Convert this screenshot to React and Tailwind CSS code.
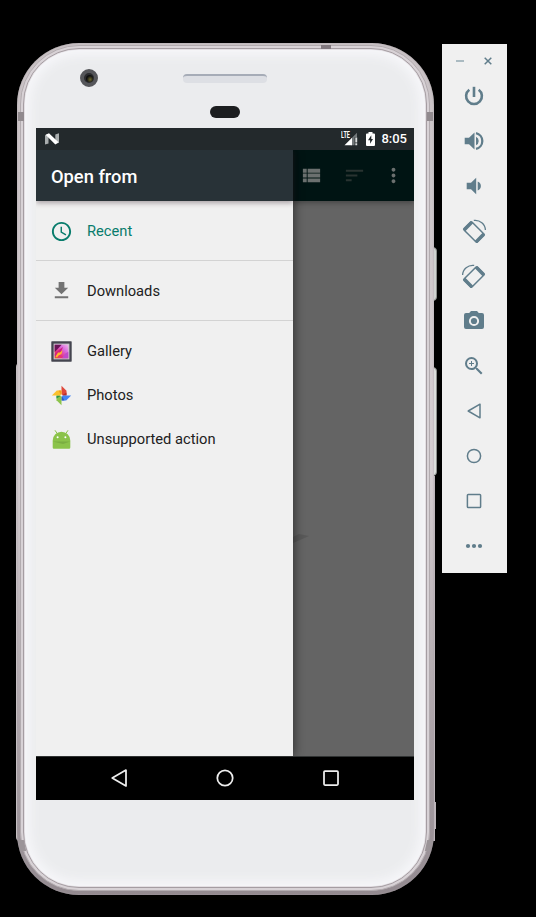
import React from 'react';
import {
  MdZoomIn,
  MdViewList,
  MdSort,
  MdMoreVert,
  MdAccessTime,
  MdFileDownload,
} from 'react-icons/md';

const BackIcon = ({ size = 24, className = '' }) => (
  <svg width={size} height={size} viewBox="0 0 24 24" className={className} fill="none" stroke="currentColor" strokeWidth="1.5" strokeLinejoin="round">
    <path d="M18 5.2v13.6L6.2 12z" />
  </svg>
);

const HomeIcon = ({ size = 24 }) => (
  <svg width={size} height={size} viewBox="0 0 24 24" fill="none" stroke="currentColor" strokeWidth="1.5">
    <circle cx="12" cy="12" r="6.6" />
  </svg>
);

const OverviewIcon = ({ size = 24, inset = 5.4 }) => (
  <svg width={size} height={size} viewBox="0 0 24 24" fill="none" stroke="currentColor" strokeWidth="1.5">
    <rect x={inset} y={inset} width={24 - 2 * inset} height={24 - 2 * inset} rx="0.8" />
  </svg>
);

const MoreIcon = () => (
  <svg width="24" height="24" viewBox="0 0 24 24" fill="currentColor">
    <circle cx="6" cy="12" r="2.1" />
    <circle cx="12" cy="12" r="2.1" />
    <circle cx="18" cy="12" r="2.1" />
  </svg>
);

const PowerIcon = () => (
  <svg width="24" height="24" viewBox="0 0 24 24" fill="none" stroke="currentColor" strokeWidth="2.6">
    <path d="M12 2.800V13" />
    <path d="M7.300 5.800a7.900 7.900 0 1 0 9.400 0" />
  </svg>
);

const VolumeUpIcon = () => (
  <svg width="24" height="24" viewBox="0 0 24 24" fill="currentColor">
    <path d="M2.700 8.700v6.600H7l5.500 5.200v-17L7 8.700zM14 7.800v8.400a4.600 4.600 0 0 0 0-8.400z" />
    <path d="M14 4.100a8.100 8.100 0 0 1 0 15.800" fill="none" stroke="currentColor" strokeWidth="2.300" />
  </svg>
);

const VolumeDownIcon = () => (
  <svg width="24" height="24" viewBox="0 0 24 24" fill="currentColor">
    <path d="M4.700 8.800v6.400H9l5.200 5V3.800L9 8.800zM15.700 7.600v8.800a4.800 4.800 0 0 0 3.200-4.400 4.800 4.800 0 0 0-3.200-4.400z" />
  </svg>
);

const CameraIcon = () => (
  <svg width="24" height="24" viewBox="0 0 24 24" fill="currentColor">
    <path fillRule="evenodd" d="M9 2 7.200 4H4a2 2 0 0 0-2 2v12a2 2 0 0 0 2 2h16a2 2 0 0 0 2-2V6a2 2 0 0 0-2-2h-3.200L15 2zm3 4.900a5.100 5.100 0 1 1 0 10.200 5.100 5.100 0 0 1 0-10.200z" />
    <circle cx="12" cy="12" r="3.100" />
  </svg>
);

const RotateIcon = ({ className = '' }) => (
  <svg width="24" height="24" viewBox="0 0 24 24" className={`overflow-visible ${className}`} fill="none" stroke="currentColor">
    <g transform="rotate(45 12 13)">
      <rect x="2.500" y="7.400" width="19" height="11.200" rx="1" strokeWidth="1.500" />
      <path d="M3.700 7.500v11M20.300 7.500v11" strokeWidth="3.200" />
    </g>
    <path d="M11.800 1.400C18 .6 23.200 5 23.400 11" strokeWidth="1.300" />
  </svg>
);

const NougatIcon = () => (
  <svg width="14" height="12" viewBox="0 0 14 12">
    <path d="M0 2.2 3.5 1v9.5L0 11.5z" fill="#a9adae" />
    <path d="M10.3 1.4 14 .2v9.6l-3.7 1.2z" fill="#a9adae" />
    <path d="M.6 1.8 4 .2 13.5 9.300l-3.200 2.200z" fill="#fff" />
  </svg>
);

const SignalIcon = () => (
  <svg width="17" height="14" viewBox="0 0 17 14">
    <path d="M10 6.8 16 .8v4.4h-2.4v8H10z" fill="#73787b" />
    <path d="M3.5 13.2 11 5.800v7.400z" fill="#fff" />
    <path d="M14.3 5.500h1.900v4.900h-1.900zM14.3 11.300h1.900v1.900h-1.900z" fill="#d8dadb" />
  </svg>
);

const BatteryIcon = () => (
  <svg width="9" height="14" viewBox="0 0 9 14">
    <path d="M2.5 0h4v1.4H8a1 1 0 0 1 1 1V13a1 1 0 0 1-1 1H1a1 1 0 0 1-1-1V2.400a1 1 0 0 1 1-1h1.500z" fill="#fff" />
    <path d="M5.300 3.300 2 8.200h2.100v3.500L7 7H5.300z" fill="#23292c" />
  </svg>
);

const GalleryIcon = () => (
  <svg width="21" height="21" viewBox="0 0 21 21">
    <defs>
      <linearGradient id="galleryPhoto" x1="0" y1="1" x2="1" y2="0">
        <stop offset="0" stopColor="#ee5a1c" />
        <stop offset=".3" stopColor="#e8307a" />
        <stop offset=".65" stopColor="#d868dc" />
        <stop offset="1" stopColor="#f3b4ee" />
      </linearGradient>
    </defs>
    <rect x=".3" y=".3" width="20.400" height="20.400" rx=".6" fill="#44454f" />
    <rect x="2.600" y="2.600" width="15.800" height="15.800" fill="#c9c4cb" />
    <rect x="3.700" y="3.700" width="13.600" height="13.600" fill="url(#galleryPhoto)" />
    <path d="M3.700 3.700h7L3.700 11z" fill="#6b1458" />
    <path d="M3.700 13 8.500 8.500 12 6 10 11l-3 2-3 3z" fill="#d02080" />
    <path d="M4.500 15.500 7 11.500l2 0 2.500-2.500-1 4-3 1.500L6 16.500z" fill="#ffb52b" />
    <path d="m11 17.300 3-4.500 3.300-2v6.500z" fill="#c04ac9" />
  </svg>
);

const PhotosIcon = () => (
  <svg width="21" height="21" viewBox="0 0 21 21">
    <path d="M10.500 10.500V.8l5 5v4.700z" fill="#df4a3c" />
    <path d="m10.500 10.500 5-3v3z" fill="#b92e2b" />
    <path d="M10.500 10.500h9.700l-5 5h-4.700z" fill="#4285f4" />
    <path d="m10.500 10.500 3 5h-3z" fill="#2c5bc4" />
    <path d="M10.500 10.500v9.700l-5-5v-4.700z" fill="#8cc34b" />
    <path d="m10.500 10.500-5 3v-3z" fill="#28964a" />
    <path d="M10.500 10.500H.8l5-5h4.700z" fill="#fbc02d" />
    <path d="m10.500 10.500-3-5h3z" fill="#f09a20" />
    <circle cx="10.500" cy="10.500" r="1.100" fill="#f5f3ed" />
  </svg>
);

const AndroidIcon = () => (
  <svg width="21" height="21" viewBox="0 0 21 21">
    <path d="M4 1.300 6.500 5M17 1.300 14.500 5" stroke="#8bc34a" strokeWidth="1" />
    <path d="M1.700 11.500a8.800 8.800 0 0 1 17.600 0v7a1.200 1.200 0 0 1-1.200 1.200H2.900a1.200 1.200 0 0 1-1.200-1.200z" fill="#8bc34a" />
    <path d="M1.700 12.500h17.600L12 15z" fill="#7aae41" />
    <circle cx="6.600" cy="8.200" r="1" fill="#fff" />
    <circle cx="14.400" cy="8.200" r="1" fill="#fff" />
  </svg>
);

function DrawerItem({ icon, label, color = 'text-[#212121]' }) {
  return (
    <div className={`flex h-11 items-center pl-[15px] ${color}`}>
      <span className="flex w-[21px] justify-center">{icon}</span>
      <span className="ml-[15px] whitespace-nowrap text-[14.7px] leading-5">{label}</span>
    </div>
  );
}

function Drawer() {
  return (
    <div className="relative z-10 flex w-[257px] flex-col bg-[#f0f0f0] shadow-[2px_0_9px_rgba(0,0,0,0.45)]">
      <div className="flex h-[51px] shrink-0 items-center bg-[#283237] pt-0.5 pl-[15px] text-[18.3px] font-medium text-white shadow-[0_2px_5px_rgba(60,40,50,0.4)]">
        Open from
      </div>
      <div className="border-b border-[#d3d3d3] pt-2 pb-[7px]">
        <DrawerItem icon={<MdAccessTime size={23} className="shrink-0" />} label="Recent" color="text-[#087c6c]" />
      </div>
      <div className="border-b border-[#d3d3d3] pt-2 pb-[7px]">
        <DrawerItem icon={<MdFileDownload size={23} className="mb-0.5 shrink-0 text-[#737373]" />} label="Downloads" />
      </div>
      <div className="pt-2">
        <DrawerItem icon={<GalleryIcon />} label="Gallery" />
        <DrawerItem icon={<PhotosIcon />} label="Photos" />
        <DrawerItem icon={<AndroidIcon />} label="Unsupported action" />
      </div>
    </div>
  );
}

function Screen() {
  return (
    <div className="flex h-[672px] w-[378px] flex-col overflow-hidden bg-black">
      <div className="flex h-[22px] shrink-0 items-center bg-[#23292c] pr-[7px] pl-[9px] text-white">
        <NougatIcon />
        <div className="relative ml-auto mr-[8px] flex">
          <SignalIcon />
          <span className="absolute -top-px left-0 origin-left scale-x-[.65] text-[8.5px] leading-[8px] font-bold">LTE</span>
        </div>
        <BatteryIcon />
        <span className="ml-[6px] text-[13px] leading-[22px] font-medium">8:05</span>
      </div>
      <div className="flex min-h-0 flex-1 overflow-hidden">
        <Drawer />
        <div className="flex flex-1 flex-col bg-[#646464]">
          <div className="flex h-[51px] items-center bg-[#001413] pl-[7px] text-[#6b706f] shadow-[0_2px_5px_rgba(0,0,0,0.3)]">
            <MdViewList size={23} />
            <MdSort size={23} className="ml-[20px] text-[#293331]" />
            <MdMoreVert size={23} className="ml-[16px]" />
          </div>
          <svg width="18" height="12" viewBox="0 0 18 12" className="mt-[332px]">
            <path d="M0 10V4L6 1l10 2z" fill="#595959" />
          </svg>
        </div>
      </div>
      <div className="flex h-11 shrink-0 items-center justify-center gap-[78px] border-t border-[#303333] bg-black pb-px text-[#eee]">
        <BackIcon size={28} />
        <HomeIcon size={28} />
        <OverviewIcon size={28} inset={6} />
      </div>
    </div>
  );
}

function Phone() {
  return (
    <div className="relative ml-[17px] mt-[43px] h-[852px] w-[417px]">
      <div className="absolute top-[320px] -left-px h-[478px] w-3 rounded-l-sm bg-[#c4bec1]" />
      <div className="absolute top-[204px] -right-[3px] h-[54px] w-2 rounded-r-sm border border-[#8c8e8c] bg-[#d0d2d0]" />
      <div className="absolute top-[324px] -right-[3px] h-[109px] w-2 rounded-r-sm border border-[#8c8e8c] bg-[#dcdedc]" />
      <div className="absolute top-[433px] -right-px h-[365px] w-3 bg-[#bcb4b9]" />
      <div className="absolute top-[759px] -right-[2px] h-[27px] w-3 bg-[#bcb4b9]" />
      <div className="relative h-full rounded-[62px] bg-linear-to-b from-[#c9c2c5] via-[#d5ced2] to-[#938a90] pt-0.5 pr-1 pb-1 pl-[3px] shadow-[inset_0_0_2px_#a59ea2]">
        <div className="h-full rounded-[59px] border border-[#b3acb0] bg-[#d8d2d6] p-0.5">
          <div className="h-full rounded-[56px] border border-[#a59da2] bg-[#e3dfe3] p-px">
            <div className="flex h-full flex-col items-center rounded-[54px] bg-[#ebecee] shadow-[inset_0_0_12px_5px_#f7f7fa]">
              <div className="relative flex h-[78px] w-full shrink-0 flex-col items-center">
                <div className="absolute top-[19px] left-[55px] flex size-[18px] items-center justify-center rounded-full border-[4px] border-[#55565a] bg-[#292a2d]">
                  <div className="size-[7px] rounded-full bg-radial-[at_60%_65%] from-[#6d682f] to-[#0c0d0e] to-60%" />
                </div>
                <div className="mt-[24px] h-[9px] w-[84px] rounded-sm border-t-2 border-[#a6acb7] bg-[#dddfe4]" />
                <div className="mt-[23px] h-3 w-[30px] shrink-0 rounded-full bg-[#1c1e20]" />
              </div>
              <Screen />
            </div>
          </div>
        </div>
      </div>
      <div className="absolute top-0.5 left-[304px] h-1 w-2.5 bg-[#81787e]" />
      <div className="absolute top-[69px] left-px h-[9px] w-1.5 bg-[#918a8e]" />
      <div className="absolute top-[69px] right-px h-[9px] w-1.5 bg-[#918a8e]" />
      <div className="absolute top-[797px] left-0.5 h-[11px] w-1.5 -skew-x-[-12deg] bg-[#9b9498]" />
      <div className="absolute top-[797px] right-0.5 h-[11px] w-1.5 -skew-x-12 bg-[#9b9498]" />
    </div>
  );
}

function EmulatorToolbar() {
  return (
    <div className="ml-2 mt-11 flex h-[529px] w-[65px] flex-col bg-[#f0f0f0] text-[#607d8b]">
      <div className="flex h-[34px] w-full items-center gap-5 pl-[14px]">
        <svg width="8" height="8" viewBox="0 0 8 8" stroke="#9db0b9" strokeWidth="1.700"><path d="M0 4h8" /></svg>
        <svg width="8" height="8" viewBox="0 0 8 8" stroke="currentColor" strokeWidth="1.500"><path d="m.700.700 6.600 6.600M7.300.700.700 7.300" /></svg>
      </div>
      <div className="mt-[6px] flex flex-col items-start gap-[21px] pl-5">
        <PowerIcon />
        <VolumeUpIcon />
        <VolumeDownIcon />
        <RotateIcon />
        <RotateIcon className="-scale-x-100" />
        <CameraIcon />
        <MdZoomIn size={24} />
        <BackIcon />
        <HomeIcon />
        <OverviewIcon />
        <MoreIcon />
      </div>
    </div>
  );
}

export default function App() {
  return (
    <div className="flex h-[917px] w-[536px] items-start overflow-hidden bg-black font-['Roboto',sans-serif]">
      <Phone />
      <EmulatorToolbar />
    </div>
  );
}
